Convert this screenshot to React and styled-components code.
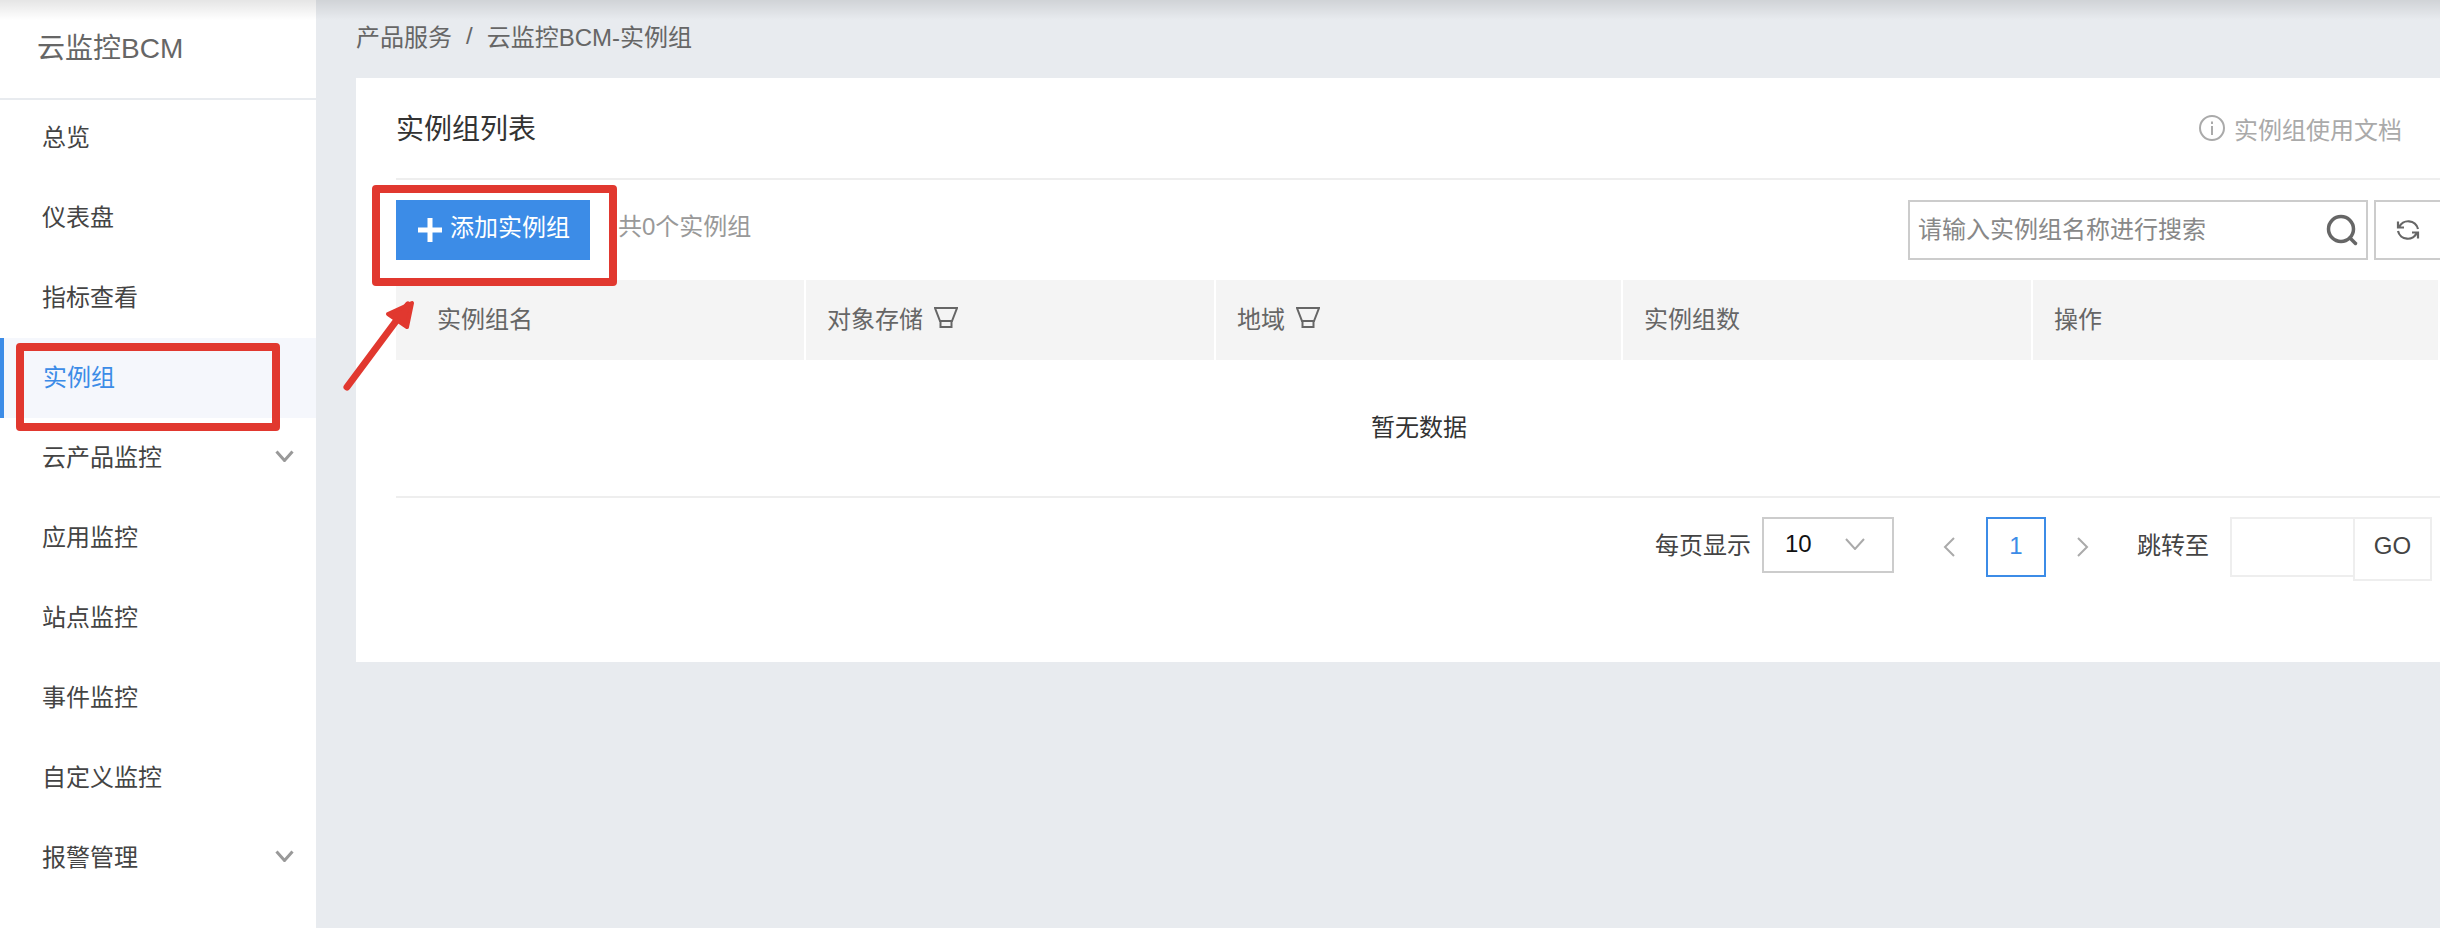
import React from 'react';
import styled, { createGlobalStyle } from 'styled-components';

const GlobalStyle = createGlobalStyle`
  html, body {
    margin: 0;
    padding: 0;
    height: 100%;
    overflow: hidden;
    background: #e8ebef;
  }
  body {
    font-family: "Liberation Sans", "Noto Sans CJK SC", sans-serif;
    color: #333;
  }
  * { box-sizing: border-box; }
`;

const Page = styled.div`
  position: relative;
  display: flex;
  width: 2440px;
  height: 928px;
  overflow: hidden;
  background: #e8ebef;
`;

/* shadow dropped by the cropped top bar */
const TopShade = styled.div`
  position: absolute;
  top: 0;
  left: 0;
  right: 0;
  height: 20px;
  background: linear-gradient(to bottom, rgba(0, 0, 0, 0.1), rgba(0, 0, 0, 0));
  pointer-events: none;
`;

const Sidebar = styled.aside`
  width: 316px;
  flex: none;
  background: #fff;
`;

const Brand = styled.div`
  height: 100px;
  padding: 0 0 6px 37px;
  display: flex;
  align-items: center;
  border-bottom: 2px solid #e8ebef;
  font-size: 28px;
  color: #666;
`;

const Menu = styled.ul`
  list-style: none;
  margin: -2px 0 0;
  padding: 0;
`;

const MenuItem = styled.li`
  height: 80px;
  padding: 0 22px 5px 43px;
  display: flex;
  align-items: center;
  justify-content: space-between;
  font-size: 24px;
  color: ${(p) => (p.$active ? '#3c8ce7' : '#444')};
  background: ${(p) => (p.$active ? '#f5f7fc' : 'transparent')};
  border-left: ${(p) => (p.$active ? '4px solid #3c8ce7' : '0')};
  padding-left: ${(p) => (p.$active ? '39px' : '42px')};
`;

const Main = styled.main`
  flex: 1;
  min-width: 0;
  padding: 0 0 0 40px;
`;

const Breadcrumb = styled.nav`
  height: 78px;
  padding: 0 0 7px 0;
  display: flex;
  align-items: center;
  font-size: 24px;
  color: #666;
`;

const Slash = styled.span`
  margin: 0 14px;
`;

const Card = styled.section`
  height: 584px;
  padding: 0 0 0 40px;
  background: #fff;
`;

const CardHeader = styled.header`
  height: 102px;
  display: flex;
  align-items: center;
  justify-content: space-between;
  border-bottom: 2px solid #eee;
`;

const Title = styled.h1`
  margin: 0 0 2px;
  font-size: 28px;
  font-weight: 400;
  color: #333;
`;

const DocLink = styled.a`
  margin-right: 38px;
  display: flex;
  align-items: center;
  gap: 9px;
  font-size: 24px;
  color: #aaa;
`;

const Toolbar = styled.div`
  height: 100px;
  padding-top: 20px;
  display: flex;
  align-items: flex-start;
`;

const AddButton = styled.button`
  width: 194px;
  height: 60px;
  padding: 0 0 0 22px;
  display: flex;
  align-items: center;
  gap: 8px;
  border: 0;
  background: #3c8ce7;
  color: #fff;
  font: inherit;
  font-size: 24px;
  line-height: 54px;
`;

const ButtonLabel = styled.span`
  margin-top: -5px;
`;

const Count = styled.span`
  margin-left: 28px;
  line-height: 53px;
  font-size: 24px;
  color: #999;
`;

const SearchBox = styled.div`
  width: 460px;
  height: 60px;
  margin-left: auto;
  padding: 0 8px 0 8px;
  display: flex;
  align-items: center;
  justify-content: space-between;
  border: 2px solid #ccc;
  font-size: 24px;
  color: #888;
`;

const SearchHint = styled.span`
  margin-top: -5px;
`;

const RefreshButton = styled.button`
  width: 80px;
  height: 60px;
  margin: 0 -14px 0 6px;
  padding: 0 0 0 20px;
  display: flex;
  align-items: center;
  border: 2px solid #ccc;
  background: #fff;
  flex: none;
`;

const HeadRow = styled.div`
  height: 80px;
  display: grid;
  grid-template-columns: 410px 410px 407px 410px 1fr;
`;

const HeadCell = styled.div`
  padding: 0 0 5px ${(p) => (p.$first ? '41px' : '21px')};
  display: flex;
  align-items: center;
  gap: 11px;
  background: #f4f4f4;
  border-right: 2px solid #fff;
  font-size: 24px;
  color: #666;
`;

const EmptyRow = styled.div`
  height: 138px;
  padding: 0 0 5px 2px;
  display: flex;
  align-items: center;
  justify-content: center;
  border-bottom: 2px solid #eee;
  font-size: 24px;
  color: #333;
`;

const Pager = styled.div`
  padding: 19px 8px 0 0;
  display: flex;
  align-items: flex-start;
  justify-content: flex-end;
  font-size: 24px;
  color: #444;
`;

const PagerLabel = styled.span`
  line-height: 57px;
`;

const PageSize = styled.div`
  width: 132px;
  height: 56px;
  margin-left: 11px;
  padding: 0 27px 3px 21px;
  display: flex;
  align-items: center;
  justify-content: space-between;
  border: 2px solid #ccc;
  color: #111;
`;

const PageArrow = styled.span`
  width: 12px;
  height: 60px;
  margin: ${(p) => p.$margin};
  display: flex;
  align-items: center;
`;

const PageNumber = styled.div`
  width: 60px;
  height: 60px;
  padding-bottom: 3px;
  display: flex;
  align-items: center;
  justify-content: center;
  border: 2px solid #3c8ce7;
  color: #3c8ce7;
`;

const JumpInput = styled.div`
  width: 123px;
  height: 60px;
  margin-left: 21px;
  border: 2px solid #eee;
  border-right: 0;
`;

const GoButton = styled.div`
  width: 79px;
  height: 64px;
  display: flex;
  align-items: center;
  justify-content: center;
  padding-bottom: 6px;
  border: 2px solid #eee;
  color: #444;
`;

/* red annotation marks drawn over the screenshot */
const Annotation = styled.div`
  position: absolute;
  left: ${(p) => p.$x}px;
  top: ${(p) => p.$y}px;
  width: ${(p) => p.$w}px;
  height: ${(p) => p.$h}px;
  border: 8px solid #e1382f;
  border-radius: 4px;
  pointer-events: none;
`;

const ArrowMark = styled.svg`
  position: absolute;
  left: 340px;
  top: 295px;
  pointer-events: none;
`;

const Plus = () => (
  <svg width="24" height="24" viewBox="0 0 24 24" fill="#fff">
    <rect x="0" y="9.500" width="24" height="5" />
    <rect x="9.500" y="0" width="5" height="24" />
  </svg>
);

const InfoIcon = () => (
  <svg width="26" height="26" viewBox="0 0 26 26" fill="none" stroke="#aaa" strokeWidth="2">
    <circle cx="13" cy="13" r="12" />
    <path d="M13 11v9" />
    <path d="M13 6.500v2.500" />
  </svg>
);

const SearchIcon = () => (
  <svg width="32" height="32" viewBox="0 0 32 32" fill="none" stroke="#666" strokeWidth="3.500">
    <circle cx="15" cy="15" r="12.500" />
    <path d="M24 24l5.500 5.500" strokeLinecap="round" />
  </svg>
);

const RefreshIcon = () => (
  <svg width="24" height="24" viewBox="0 0 24 24" fill="none" stroke="#666" strokeWidth="2.200">
    <path d="M3 9.500A10 10 0 0 1 22 11" />
    <path d="M2 3.500v6h6" />
    <path d="M21 14.500A10 10 0 0 1 2 13" />
    <path d="M22 20.500v-6h-6" />
  </svg>
);

const FilterIcon = () => (
  <svg width="24" height="21" viewBox="0 0 24 21" fill="none" stroke="#666" strokeWidth="2">
    <path d="M1 1h22l-5 13H6z" />
    <path d="M6.500 14v6h11v-6" />
  </svg>
);

const Chevron = ({ size = 'side', dir = 'down', color = '#aaa' }) => {
  if (dir === 'left') {
    return (
      <svg width="12" height="20" viewBox="0 0 12 20" fill="none" stroke={color} strokeWidth="2">
        <path d="M11 1L2 10l9 9" />
      </svg>
    );
  }
  if (dir === 'right') {
    return (
      <svg width="12" height="20" viewBox="0 0 12 20" fill="none" stroke={color} strokeWidth="2">
        <path d="M1 1l9 9-9 9" />
      </svg>
    );
  }
  return size === 'thin' ? (
    <svg width="20" height="12" viewBox="0 0 20 12" fill="none" stroke={color} strokeWidth="2">
      <path d="M1 1l9 10 9-10" />
    </svg>
  ) : (
    <svg width="19" height="12" viewBox="0 0 19 12" fill="none" stroke="#999" strokeWidth="3">
      <path d="M1.500 1.500l8 9 8-9" />
    </svg>
  );
};

const menu = [
  { label: '总览' },
  { label: '仪表盘' },
  { label: '指标查看' },
  { label: '实例组', active: true },
  { label: '云产品监控', expandable: true },
  { label: '应用监控' },
  { label: '站点监控' },
  { label: '事件监控' },
  { label: '自定义监控' },
  { label: '报警管理', expandable: true },
];

const columns = [
  { label: '实例组名', first: true },
  { label: '对象存储', filter: true },
  { label: '地域', filter: true },
  { label: '实例组数' },
  { label: '操作' },
];

const App = () => (
  <Page>
    <GlobalStyle />
    <Sidebar>
      <Brand>云监控BCM</Brand>
      <Menu>
        {menu.map((item) => (
          <MenuItem key={item.label} $active={item.active}>
            {item.label}
            {item.expandable && <Chevron />}
          </MenuItem>
        ))}
      </Menu>
    </Sidebar>

    <Main>
      <Breadcrumb>
        产品服务<Slash>/</Slash>云监控BCM-实例组
      </Breadcrumb>
      <Card>
        <CardHeader>
          <Title>实例组列表</Title>
          <DocLink>
            <InfoIcon />
            实例组使用文档
          </DocLink>
        </CardHeader>

        <Toolbar>
          <AddButton>
            <Plus />
            <ButtonLabel>添加实例组</ButtonLabel>
          </AddButton>
          <Count>共0个实例组</Count>
          <SearchBox>
            <SearchHint>请输入实例组名称进行搜索</SearchHint>
            <SearchIcon />
          </SearchBox>
          <RefreshButton>
            <RefreshIcon />
          </RefreshButton>
        </Toolbar>

        <HeadRow>
          {columns.map((col) => (
            <HeadCell key={col.label} $first={col.first}>
              {col.label}
              {col.filter && <FilterIcon />}
            </HeadCell>
          ))}
        </HeadRow>
        <EmptyRow>暂无数据</EmptyRow>

        <Pager>
          <PagerLabel>每页显示</PagerLabel>
          <PageSize>
            10
            <Chevron size="thin" />
          </PageSize>
          <PageArrow $margin="0 31px 0 49px">
            <Chevron dir="left" />
          </PageArrow>
          <PageNumber>1</PageNumber>
          <PageArrow $margin="0 48px 0 31px">
            <Chevron dir="right" />
          </PageArrow>
          <PagerLabel>跳转至</PagerLabel>
          <JumpInput />
          <GoButton>GO</GoButton>
        </Pager>
      </Card>
    </Main>

    <TopShade />
    <Annotation $x={16} $y={343} $w={264} $h={88} />
    <Annotation $x={372} $y={185} $w={245} $h={101} />
    <ArrowMark width="80" height="100" viewBox="0 0 80 100">
      <path d="M7 92L68 10" fill="none" stroke="#e1382f" strokeWidth="7" strokeLinecap="round" />
      <path d="M48 19L72 8L67 32z" fill="#e1382f" stroke="#e1382f" strokeWidth="4" strokeLinejoin="round" />
    </ArrowMark>
  </Page>
);

export default App;
